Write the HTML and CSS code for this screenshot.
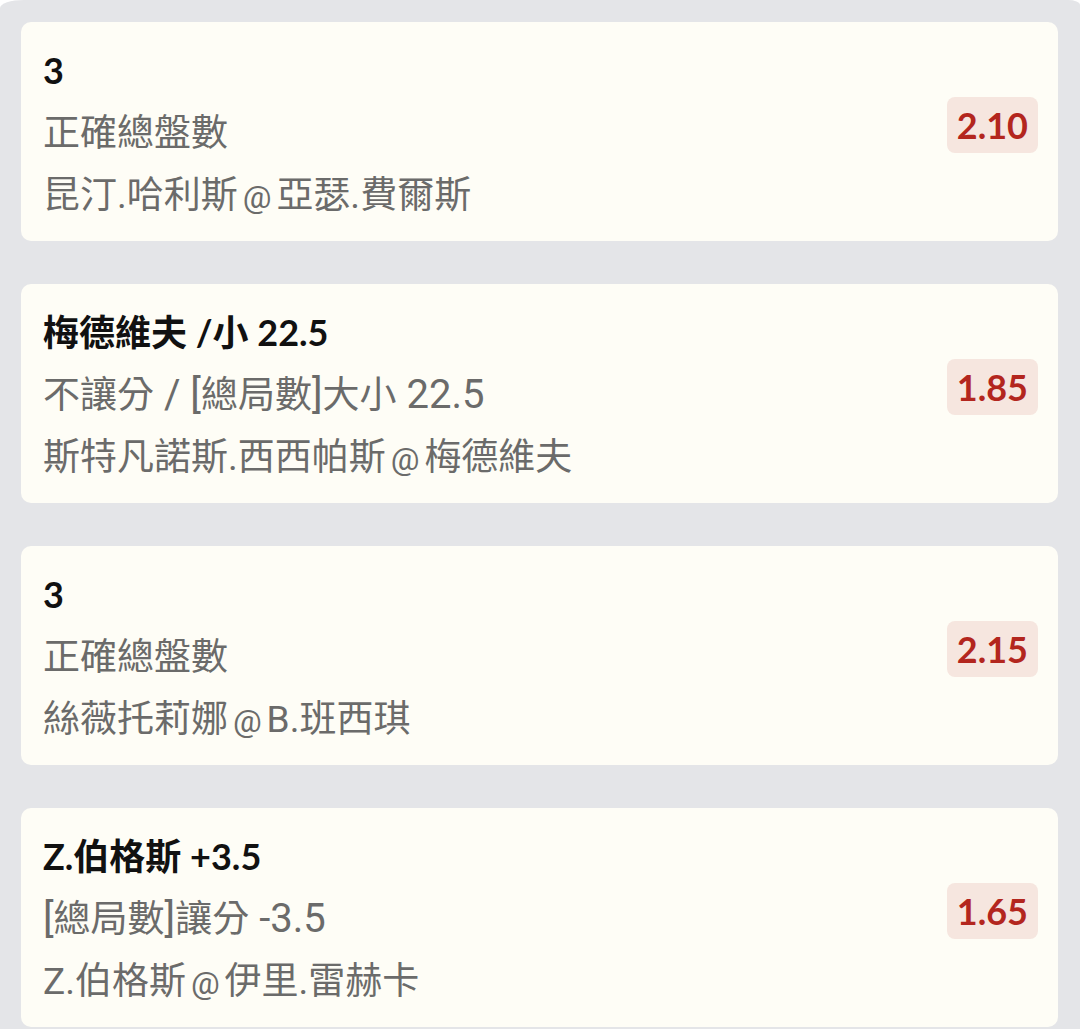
FILE: index.html
```html
<!DOCTYPE html>
<html lang="zh-Hant">
<head>
    <meta charset="UTF-8">
    <meta name="viewport" content="width=device-width, initial-scale=1.0">
    <title>投注選項</title>
    <link rel="stylesheet" href="styles.css">
</head>
<body>
    <div class="list">
        <div class="bet">
            <div class="info">
                <div class="pick">3</div>
                <div class="line">正確總盤數</div>
                <div class="line">昆汀.哈利斯<span class="at"> @ </span>亞瑟.費爾斯</div>
            </div>
            <div class="odds">2.10</div>
        </div>
        <div class="bet">
            <div class="info">
                <div class="pick">梅德維夫 /小 22.5</div>
                <div class="line">不讓分<span class="num"> / [</span>總局數<span class="num">]</span>大小<span class="num"> 22.5</span></div>
                <div class="line">斯特凡諾斯.西西帕斯<span class="at"> @ </span>梅德維夫</div>
            </div>
            <div class="odds">1.85</div>
        </div>
        <div class="bet">
            <div class="info">
                <div class="pick">3</div>
                <div class="line">正確總盤數</div>
                <div class="line">絲薇托莉娜<span class="at"> @ </span>B.班西琪</div>
            </div>
            <div class="odds">2.15</div>
        </div>
        <div class="bet">
            <div class="info">
                <div class="pick">Z.伯格斯 +3.5</div>
                <div class="line"><span class="num">[</span>總局數<span class="num">]</span>讓分<span class="num"> -3.5</span></div>
                <div class="line">Z.伯格斯<span class="at"> @ </span>伊里.雷赫卡</div>
            </div>
            <div class="odds">1.65</div>
        </div>
    </div>
</body>
</html>
```

FILE: styles.css
```css
body {
    margin: 0;
    padding: 0;
    background-color: #ffffff;
    font-family: Roboto, "Noto Sans CJK TC", sans-serif;
}
.list {
    display: flex;
    flex-direction: column;
    gap: 43px;
    padding: 22px 22px 2px 21px;
    background-color: #e4e5e8;
    border-radius: 24px 12px 0 0 / 8px 5px 0 0;
}
.bet {
    display: flex;
    align-items: center;
    justify-content: space-between;
    height: 219px;
    box-sizing: border-box;
    padding: 19px 20px 14px 22px;
    background-color: #fefdf6;
    border-radius: 10px;
}
.info {
    display: flex;
    flex-direction: column;
}
.pick, .line {
    height: 62px;
    white-space: nowrap;
}
.pick {
    line-height: 58px;
    font-family: Lato, "Noto Sans CJK TC", sans-serif;
    font-size: 36px;
    font-weight: bold;
    color: #111111;
}
.line {
    line-height: 62px;
    font-size: 37px;
    color: #6b6b6a;
}
.line .num {
    font-size: 40px;
    line-height: 1;
}
.line .at {
    font-size: 32px;
    line-height: 1;
    word-spacing: -3px;
}
.odds {
    margin-bottom: 18px;
    padding: 0 10px;
    height: 56px;
    line-height: 56px;
    border-radius: 8px;
    background-color: #f6e6df;
    color: #b3261e;
    font-family: Lato, sans-serif;
    font-weight: bold;
    font-size: 36px;
}
```
